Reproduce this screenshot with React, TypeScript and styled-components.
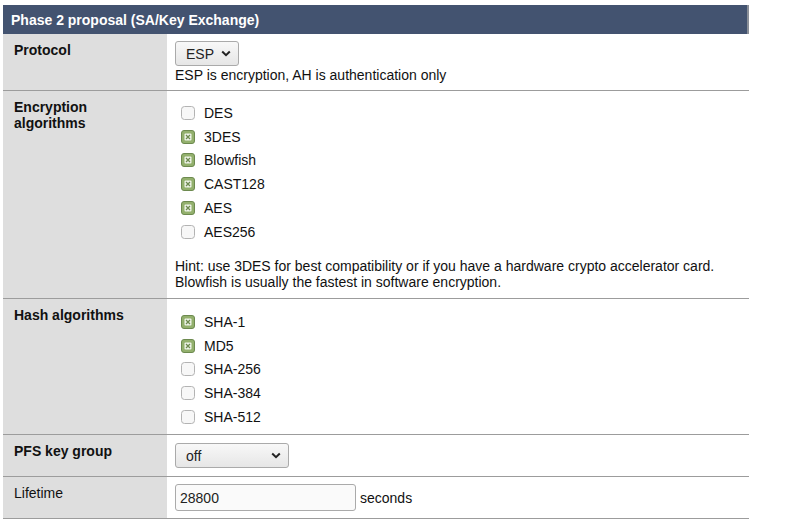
import React from 'react'
import styled, {createGlobalStyle} from 'styled-components'

const GlobalStyle = createGlobalStyle`
  body {
    margin: 0;
    background: #fff;
    font-family: "Liberation Sans", Arial, sans-serif;
    font-size: 14px;
    color: #111;
  }
`

const Page = styled.div`
  padding: 5px 0 0 3px;
  width: 746px;
`

const Header = styled.div`
  height: 29px;
  box-sizing: border-box;
  background: #435370;
  border-right: 2px solid #8a8f98;
  color: #fff;
  font-weight: bold;
  font-size: 14px;
  padding: 7px 8px 0;
`

const Row = styled.div<{$height: number}>`
  display: grid;
  grid-template-columns: 164px 1fr;
  height: ${p => p.$height}px;
  border-bottom: 1px solid #9c9c9c;
`

const Label = styled.div<{$plain?: boolean}>`
  background: #dedede;
  padding: 8px 11px 0;
  font-weight: ${p => (p.$plain ? 'normal' : 'bold')};
  line-height: 16px;
`

const Value = styled.div<{$top: number}>`
  padding: ${p => p.$top}px 8px 0;
  line-height: 16px;
`

const SelectBox = styled.div<{$width: number}>`
  display: inline-flex;
  align-items: center;
  justify-content: space-between;
  width: ${p => p.$width}px;
  height: 25px;
  box-sizing: border-box;
  border: 1px solid #aaa;
  border-radius: 3px;
  background: linear-gradient(#f8f8f8, #e6e6e6);
  padding: 0 7px 0 10px;
  font-size: 14px;
  color: #222;
`

const Note = styled.div`
  margin-top: 1px;
`

const OptionList = styled.div`
  display: flex;
  flex-direction: column;
`

const Option = styled.div`
  display: flex;
  align-items: center;
  height: 23.75px;
  gap: 9px;
  padding-left: 6px;
`

const Hint = styled.div`
  margin-top: 14px;
`

const TextInput = styled.div`
  display: inline-flex;
  align-items: center;
  width: 181px;
  height: 27px;
  box-sizing: border-box;
  border: 1px solid #aaa;
  border-radius: 3px;
  background: #fafafa;
  padding-left: 4px;
  color: #222;
`

const Inline = styled.div`
  display: flex;
  align-items: center;
  gap: 4px;
`

function Chevron() {
  return (
    <svg width="10" height="7" viewBox="0 0 10 7">
      <path d="M1.2 1.5 L5 5.2 L8.8 1.5" fill="none" stroke="#222" strokeWidth="2" />
    </svg>
  )
}

function Check({checked}: {checked: boolean}) {
  if (!checked) {
    return (
      <svg width="14" height="14" viewBox="0 0 14 14">
        <rect x="0.5" y="0.5" width="13" height="13" rx="3" fill="#f7f7f7" stroke="#b3b3b3" />
      </svg>
    )
  }
  return (
    <svg width="14" height="14" viewBox="0 0 14 14">
      <rect x="0.5" y="0.5" width="13" height="13" rx="2.5" fill="#93b06d" stroke="#6d8a4f" />
      <rect x="3.5" y="3.5" width="7" height="7" rx="1" fill="#eef3e8" />
      <path d="M5 5 L9 9 M9 5 L5 9" stroke="#6d8a4f" strokeWidth="1.3" />
    </svg>
  )
}

const encryption = [
  {name: 'DES', on: false},
  {name: '3DES', on: true},
  {name: 'Blowfish', on: true},
  {name: 'CAST128', on: true},
  {name: 'AES', on: true},
  {name: 'AES256', on: false},
]

const hashes = [
  {name: 'SHA-1', on: true},
  {name: 'MD5', on: true},
  {name: 'SHA-256', on: false},
  {name: 'SHA-384', on: false},
  {name: 'SHA-512', on: false},
]

export default function App() {
  return (
    <Page>
      <GlobalStyle />
      <Header>Phase 2 proposal (SA/Key Exchange)</Header>

      <Row $height={56}>
        <Label>Protocol</Label>
        <Value $top={7}>
          <SelectBox $width={64}>
            ESP <Chevron />
          </SelectBox>
          <Note>ESP is encryption, AH is authentication only</Note>
        </Value>
      </Row>

      <Row $height={207}>
        <Label>
          Encryption
          <br />
          algorithms
        </Label>
        <Value $top={10}>
          <OptionList>
            {encryption.map(o => (
              <Option key={o.name}>
                <Check checked={o.on} />
                {o.name}
              </Option>
            ))}
          </OptionList>
          <Hint>
            Hint: use 3DES for best compatibility or if you have a hardware crypto accelerator card.
            <br />
            Blowfish is usually the fastest in software encryption.
          </Hint>
        </Value>
      </Row>

      <Row $height={135}>
        <Label>Hash algorithms</Label>
        <Value $top={11}>
          <OptionList>
            {hashes.map(o => (
              <Option key={o.name}>
                <Check checked={o.on} />
                {o.name}
              </Option>
            ))}
          </OptionList>
        </Value>
      </Row>

      <Row $height={41}>
        <Label>PFS key group</Label>
        <Value $top={8}>
          <SelectBox $width={114}>
            off <Chevron />
          </SelectBox>
        </Value>
      </Row>

      <Row $height={41}>
        <Label $plain>Lifetime</Label>
        <Value $top={7}>
          <Inline>
            <TextInput>28800</TextInput>
            seconds
          </Inline>
        </Value>
      </Row>
    </Page>
  )
}
